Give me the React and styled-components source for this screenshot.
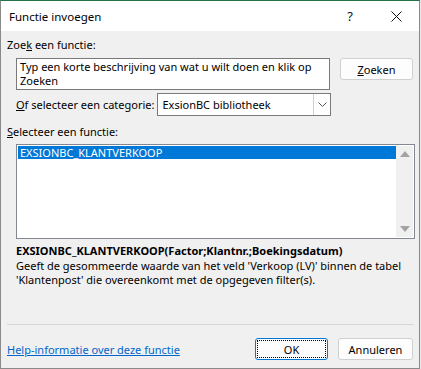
import React from 'react'
import styled, { createGlobalStyle } from 'styled-components'

const Global = createGlobalStyle`
  html, body {
    margin: 0;
    padding: 0;
    background: #e9e9e9;
  }
  body {
    font-family: 'Noto Sans', 'Open Sans', sans-serif;
    font-size: 11px;
    color: #000000;
  }
`

const Window = styled.div`
  box-sizing: border-box;
  width: 420px;
  height: 369px;
  background: #f0f0f0;
  border: 1px solid #8a8a8a;
  border-top-color: #217346;
  display: flex;
  flex-direction: column;
`

const TitleBar = styled.div`
  height: 30px;
  background: #ffffff;
  display: flex;
  align-items: center;
  padding-left: 8px;
  font-size: 11.5px;
`

const Title = styled.div`
  flex: 1;
`

const TitleButton = styled.div`
  width: 46px;
  height: 30px;
  display: flex;
  align-items: center;
  justify-content: center;
  font-size: 13px;
  color: #111;
`

const Body = styled.div`
  flex: 1;
  display: flex;
  flex-direction: column;
  padding: 6px 5px 0 6px;
`

const Label = styled.div`
  line-height: 15px;
  height: 15px;
  margin-left: ${p => p.indent || 0}px;
  margin-top: ${p => p.top || 0}px;
  white-space: nowrap;
`

const SearchRow = styled.div`
  display: flex;
  align-items: flex-start;
  margin-top: 6px;
  margin-left: 9px;
  gap: 10px;
`

const SearchBox = styled.div`
  box-sizing: border-box;
  width: 314px;
  height: 32px;
  background: #ffffff;
  border: 1px solid #7a7a7a;
  padding: 1px 3px 0;
  line-height: 14px;
`

const Button = styled.div`
  box-sizing: border-box;
  width: ${p => p.width || 73}px;
  height: 22px;
  background: #fdfdfd;
  border: 1px solid ${p => (p.focused ? '#0078d7' : '#d0d0d0')};
  border-radius: 3px;
  display: flex;
  align-items: center;
  justify-content: center;
  padding: 1px;
`

const FocusRect = styled.div`
  box-sizing: border-box;
  width: 100%;
  height: 100%;
  display: flex;
  align-items: center;
  justify-content: center;
  border: ${p => (p.focused ? '1px dotted #000' : '1px solid transparent')};
`

const CategoryRow = styled.div`
  display: flex;
  align-items: center;
  margin-top: 3px;
  margin-left: 9px;
  gap: 3px;
`

const Select = styled.div`
  box-sizing: border-box;
  width: 174px;
  height: 23px;
  background: #ffffff;
  border: 1px solid #7a7a7a;
  display: flex;
  align-items: center;
  padding-left: 4px;
`

const SelectValue = styled.div`
  flex: 1;
`

const DropButton = styled.div`
  width: 16px;
  height: 21px;
  border-left: 1px solid #cfcfcf;
  display: flex;
  align-items: center;
  justify-content: center;
`

const ListBox = styled.div`
  box-sizing: border-box;
  width: 399px;
  height: 95px;
  margin-left: 9px;
  margin-top: 5px;
  background: #ffffff;
  border: 1px solid #828790;
  display: flex;
  padding: 1px;
`

const ListItems = styled.div`
  flex: 1;
`

const ListItem = styled.div`
  height: 13px;
  line-height: 13px;
  padding-left: 2px;
  background: ${p => (p.selected ? '#0078d7' : 'transparent')};
  color: ${p => (p.selected ? '#ffffff' : '#000')};
`

const ScrollBar = styled.div`
  width: 17px;
  background: #f0f0f0;
  display: flex;
  flex-direction: column;
  justify-content: space-between;
  align-items: center;
  padding: 5px 0;
`

const Signature = styled.div`
  font-weight: bold;
  margin-left: 9px;
  margin-top: 4px;
  line-height: 15px;
`

const Description = styled.div`
  margin-left: 9px;
  margin-top: 1px;
  line-height: 14px;
  width: 400px;
`

const Separator = styled.div`
  height: 1px;
  background: #d6d6d6;
  margin-top: auto;
  width: 407px;
`

const Footer = styled.div`
  display: flex;
  align-items: center;
  height: 22px;
  margin-top: 13px;
  margin-bottom: 8px;
  padding-right: 1px;
  gap: 10px;
`

const HelpLink = styled.div`
  flex: 1;
  color: #0066cc;
  text-decoration: underline;
`

const Triangle = ({ up }) => (
  <svg width="10" height="6" viewBox="0 0 10 6">
    <polygon points={up ? '0,6 5,0 10,6' : '0,0 5,6 10,0'} fill="#a3a3a3" />
  </svg>
)

export default function App() {
  return (
    <>
      <Global />
      <Window>
        <TitleBar>
          <Title>Functie invoegen</Title>
          <TitleButton>?</TitleButton>
          <TitleButton>
            <svg width="11" height="11" viewBox="0 0 11 11">
              <path d="M0.5 0.5 L10.5 10.5 M10.5 0.5 L0.5 10.5" stroke="#111" strokeWidth="1" />
            </svg>
          </TitleButton>
        </TitleBar>
        <Body>
          <Label>
            Zoe<u>k</u> een functie:
          </Label>
          <SearchRow>
            <SearchBox>
              Typ een korte beschrijving van wat u wilt doen en klik op Zoeken
            </SearchBox>
            <Button>
              <FocusRect>
                <span>
                  <u>Z</u>oeken
                </span>
              </FocusRect>
            </Button>
          </SearchRow>
          <CategoryRow>
            <Label>
              <u>O</u>f selecteer een categorie:
            </Label>
            <Select>
              <SelectValue>ExsionBC bibliotheek</SelectValue>
              <DropButton>
                <svg width="9" height="5" viewBox="0 0 9 5">
                  <path d="M0.5 0.5 L4.5 4.5 L8.5 0.5" stroke="#555" fill="none" strokeWidth="1" />
                </svg>
              </DropButton>
            </Select>
          </CategoryRow>
          <Label top={8}>
            <u>S</u>electeer een functie:
          </Label>
          <ListBox>
            <ListItems>
              <ListItem selected>EXSIONBC_KLANTVERKOOP</ListItem>
            </ListItems>
            <ScrollBar>
              <Triangle up />
              <Triangle />
            </ScrollBar>
          </ListBox>
          <Signature>EXSIONBC_KLANTVERKOOP(Factor;Klantnr.;Boekingsdatum)</Signature>
          <Description>
            Geeft de gesommeerde waarde van het veld 'Verkoop (LV)' binnen de tabel
            'Klantenpost' die overeenkomt met de opgegeven filter(s).
          </Description>
          <Separator />
          <Footer>
            <HelpLink>Help-informatie over deze functie</HelpLink>
            <Button width={73} focused>
              <FocusRect focused>OK</FocusRect>
            </Button>
            <Button width={75}>
              <FocusRect>Annuleren</FocusRect>
            </Button>
          </Footer>
        </Body>
      </Window>
    </>
  )
}
